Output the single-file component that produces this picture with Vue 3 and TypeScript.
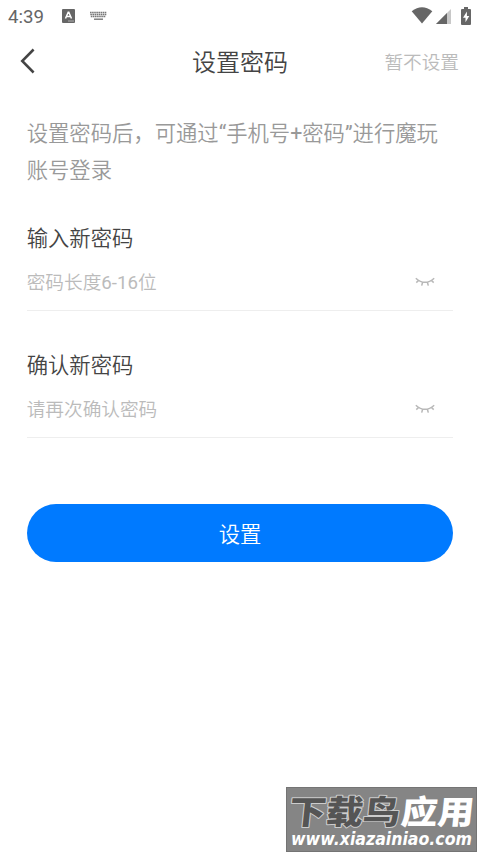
<script setup lang="ts">
import { ref } from 'vue'

interface Field {
  label: string
  placeholder: string
}

const fields: Field[] = [
  { label: '输入新密码', placeholder: '密码长度6-16位' },
  { label: '确认新密码', placeholder: '请再次确认密码' },
]
const values = ref<string[]>(['', ''])
</script>

<template>
  <div class="screen">
    <div class="status">
      <span class="time">4:39</span>
      <svg class="input-icon" width="13" height="14" viewBox="0 0 13 14">
        <rect width="13" height="14" rx="1" fill="#666" />
        <path d="M3.5 9.5 6.2 3.3h.6l2.7 6.2M4.6 7.5h3.8" fill="none" stroke="#fff" stroke-width="1.5" />
        <path d="M6.5 12h1m1 0h1m1 0h1" stroke="#fff" />
      </svg>
      <svg class="keyboard-icon" width="17" height="10" viewBox="0 0 17 10">
        <path d="M0 1.5h16.5M.3 3.5h16M.8 5.5h15" fill="none" stroke="#777" stroke-width="1.3" stroke-dasharray="1.6 .5" />
        <path d="M4 8.2h9" stroke="#777" stroke-width="1.4" />
      </svg>
      <span class="spacer"></span>
      <svg class="wifi" width="22" height="17" viewBox="0 0 22 17">
        <path d="M.7 4.2Q11-3.6 21.3 4.2L11 16.5Z" fill="#666" />
      </svg>
      <svg class="signal" width="15" height="15" viewBox="0 0 15 15">
        <path d="M0 15 15 0v15Z" fill="#c8c8c8" />
        <path d="M0 15 11 4v11Z" fill="#666" />
      </svg>
      <svg class="battery" width="10" height="18" viewBox="0 0 10 18">
        <path d="M3 0h4v2h2q1 0 1 1v14q0 1-1 1H1q-1 0-1-1V3q0-1 1-1h2Z" fill="#666" />
        <path d="M5.9 4.4 2 10.7h2.5v4.6L8.3 9H5.9Z" fill="#fff" />
      </svg>
    </div>

    <header class="bar">
      <svg class="back" width="16" height="26" viewBox="0 0 16 26">
        <path d="M13.6 1.5 2.2 13l11.4 11.5" fill="none" stroke="#444" stroke-width="2.5" />
      </svg>
      <h1>设置密码</h1>
      <span class="skip">暂不设置</span>
    </header>

    <main>
      <p class="hint">设置密码后，可通过<span class="latin">“</span>手机号<span class="latin">+</span>密码<span class="latin">”</span>进行魔玩账号登录</p>
      <section v-for="(field, i) in fields" :key="field.label" class="field">
        <label>{{ field.label }}</label>
        <div class="row">
          <input v-model="values[i]" type="password" :placeholder="field.placeholder" />
          <svg width="20" height="10" viewBox="0 0 20 10">
            <path d="M.8 1.2Q10 9.4 19.2 1.2M3.7 3.3 1.3 5.6M7.6 5.2 6.7 8.6M12.4 5.2l.9 3.4M16.3 3.3l2.4 2.3" fill="none" stroke="#b8b8b8" stroke-width="1.5" />
          </svg>
        </div>
      </section>
      <button type="button">设置</button>
    </main>

    <svg class="watermark" width="191" height="65" viewBox="0 0 191 65">
      <rect x=".5" y=".5" width="190" height="64" fill="#858585" stroke="#747474" />
      <g class="brand" transform="skewX(-6)">
        <text x="6" y="37" textLength="111" lengthAdjust="spacingAndGlyphs" class="dark">下载鸟</text>
        <text x="118" y="37" textLength="73" lengthAdjust="spacingAndGlyphs" class="light">应用</text>
      </g>
      <text x="5" y="58" textLength="181" lengthAdjust="spacingAndGlyphs" class="url">www.xiazainiao.com</text>
    </svg>
  </div>
</template>

<style>
body {
  margin: 0;
  background: #fff;
}
</style>

<style scoped>
.screen {
  position: relative;
  width: 480px;
  height: 855px;
  overflow: hidden;
  background: #fff;
  font-family: Roboto, "Noto Sans CJK SC", sans-serif;
  font-weight: 350;
}
.status {
  display: flex;
  align-items: center;
  height: 32px;
  padding: 0 9px 0 8px;
  box-sizing: border-box;
}
.time {
  width: 54px;
  padding-top: 2px;
  font-size: 18.67px;
  font-weight: 400;
  color: #666;
}
.keyboard-icon {
  margin-left: 15px;
}
.wifi {
  margin-bottom: 1px;
}
.spacer {
  flex: 1;
}
.signal {
  margin: 1px 10px 0 3px;
}
.battery {
  margin-bottom: 1px;
}
.bar {
  display: grid;
  grid-template-columns: 1fr auto 1fr;
  align-items: center;
  height: 59px;
  padding: 0 21px 0 20px;
}
.back {
  display: block;
  margin-bottom: 1px;
}
h1 {
  margin: 2px 0 0 1px;
  font-size: 24px;
  line-height: 36px;
  font-weight: 350;
  color: #444;
}
.skip {
  justify-self: end;
  margin-bottom: 2px;
  font-size: 18.67px;
  color: #bbb;
}
main {
  padding: 24px 26.67px 0;
}
.hint {
  margin: 0 0 30px;
  font-size: 21.33px;
  line-height: 37px;
  color: #999;
}
.latin {
  font-weight: 400;
}
.field {
  height: 91px;
  margin-bottom: 35px;
  border-bottom: 1px solid #eee;
}
label {
  display: block;
  font-size: 21.33px;
  line-height: 40px;
  color: #444;
}
.row {
  display: flex;
  align-items: center;
  justify-content: space-between;
  height: 46px;
  padding-right: 18px;
}
input {
  width: 300px;
  padding: 1px 0 0;
  border: 0;
  outline: 0;
  background: transparent;
  font: 400 18.67px Roboto, "Noto Sans CJK SC DemiLight", "Noto Sans CJK SC", sans-serif;
  color: #444;
}
input::placeholder {
  color: #bbb;
  opacity: 1;
}
button {
  display: block;
  width: 100%;
  height: 58.67px;
  margin-top: 65.6px;
  padding: 0 0 1px;
  border: 0;
  border-radius: 30px;
  background: #007aff;
  color: #fff;
  font: 350 21.33px Roboto, "Noto Sans CJK SC", sans-serif;
}
.watermark {
  position: absolute;
  left: 286px;
  top: 787px;
}
.brand text {
  font: 900 33px "Noto Sans CJK SC", sans-serif;
  paint-order: stroke;
  stroke-linejoin: round;
}
.dark {
  fill: #555;
  stroke: #ccc;
  stroke-width: 2px;
}
.light {
  fill: #fff;
}
.url {
  font: italic 700 17px "DejaVu Sans", "Noto Sans", sans-serif;
  fill: #fff;
}
</style>
